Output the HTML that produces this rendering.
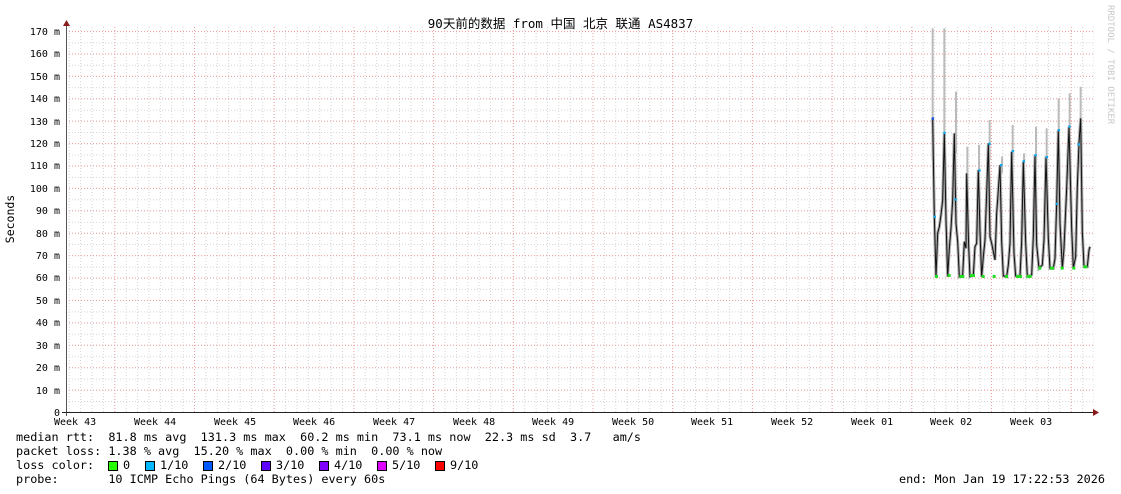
<!DOCTYPE html>
<html><head><meta charset="utf-8"><style>
html,body{margin:0;padding:0;background:#fff;}
body{width:1121px;height:494px;position:relative;overflow:hidden;font-family:"DejaVu Sans Mono","Liberation Mono",monospace;color:#000;}
.t{position:absolute;white-space:pre;}
.leg{font-size:11.8px;left:16px;}
.sq{position:absolute;width:8px;height:8px;border:1px solid #000;}
</style></head><body>
<svg width="1121" height="494" style="position:absolute;left:0;top:0">
<defs>
<pattern id="gv" x="114.3" y="0" width="11.386" height="494" patternUnits="userSpaceOnUse">
<line x1="0.5" y1="0" x2="0.5" y2="494" stroke="#d4d4d4" stroke-width="1" stroke-dasharray="1,2"/></pattern>
<pattern id="rv" x="114.3" y="0" width="79.7" height="494" patternUnits="userSpaceOnUse">
<line x1="0.5" y1="0" x2="0.5" y2="494" stroke="#f0a0a0" stroke-width="1" stroke-dasharray="1,2"/></pattern>
<pattern id="gh" x="0" y="31.2" width="1121" height="11.206" patternUnits="userSpaceOnUse">
<line x1="0" y1="0.5" x2="1121" y2="0.5" stroke="#d4d4d4" stroke-width="1" stroke-dasharray="1,2"/></pattern>
<pattern id="rh" x="0" y="31" width="1121" height="22.412" patternUnits="userSpaceOnUse">
<line x1="0" y1="0.5" x2="1121" y2="0.5" stroke="#f0a0a0" stroke-width="1" stroke-dasharray="1,2"/></pattern>
</defs>
<rect x="67" y="26" width="1027" height="386" fill="url(#gv)"/>
<rect x="67" y="26" width="1027" height="386" fill="url(#gh)"/>
<rect x="67" y="26" width="1027" height="386" fill="url(#rv)"/>
<rect x="67" y="26" width="1027" height="380" fill="url(#rh)"/>
<g transform="translate(920,20) scale(0.33333)">
<g stroke="#bbb" stroke-width="2">
<line x1="38" y1="25" x2="38" y2="420" vector-effect="non-scaling-stroke"/>
<line x1="73" y1="25" x2="73" y2="350" vector-effect="non-scaling-stroke"/>
<line x1="108" y1="215" x2="108" y2="400" vector-effect="non-scaling-stroke"/>
<line x1="209" y1="300" x2="209" y2="420" vector-effect="non-scaling-stroke"/>
<line x1="142" y1="380" x2="142" y2="480" vector-effect="non-scaling-stroke"/>
<line x1="177" y1="375" x2="177" y2="460" vector-effect="non-scaling-stroke"/>
<line x1="278" y1="315" x2="278" y2="420" vector-effect="non-scaling-stroke"/>
<line x1="348" y1="320" x2="348" y2="430" vector-effect="non-scaling-stroke"/>
<line x1="380" y1="325" x2="380" y2="440" vector-effect="non-scaling-stroke"/>
<line x1="416" y1="235" x2="416" y2="340" vector-effect="non-scaling-stroke"/>
<line x1="449" y1="220" x2="449" y2="330" vector-effect="non-scaling-stroke"/>
<line x1="482" y1="200" x2="482" y2="300" vector-effect="non-scaling-stroke"/>
<line x1="246" y1="410" x2="246" y2="460" vector-effect="non-scaling-stroke"/>
<line x1="312" y1="400" x2="312" y2="460" vector-effect="non-scaling-stroke"/>
</g>
<polyline fill="none" stroke="#aaa" stroke-width="3" vector-effect="non-scaling-stroke" points="38,295 43,590 48,770 53,640 58,620 63,585 68,540 73,340 78,600 83,770 88,685 93,625 98,540 103,340 108,610 113,665 118,770 128,765 133,665 138,685 140,460 146,680 150,770 160,765 165,680 170,670 175,450 180,635 185,770 190,710 195,660 200,520 205,370 210,650 215,670 225,720 230,580 235,510 240,435 245,665 250,768 260,770 265,735 270,670 275,395 282,700 287,768 300,768 305,665 310,425 317,668 322,770 335,765 340,650 345,405 350,675 357,745 367,735 372,660 378,410 385,655 390,745 400,745 405,715 410,550 415,330 420,610 427,745 432,685 440,505 447,320 455,625 460,745 467,710 472,500 477,370 482,295 487,635 492,740 502,740 507,690 510,680"/>
<polyline fill="none" stroke="#111" stroke-width="1" vector-effect="non-scaling-stroke" points="38,295 43,590 48,770 53,640 58,620 63,585 68,540 73,340 78,600 83,770 88,685 93,625 98,540 103,340 108,610 113,665 118,770 128,765 133,665 138,685 140,460 146,680 150,770 160,765 165,680 170,670 175,450 180,635 185,770 190,710 195,660 200,520 205,370 210,650 215,670 225,720 230,580 235,510 240,435 245,665 250,768 260,770 265,735 270,670 275,395 282,700 287,768 300,768 305,665 310,425 317,668 322,770 335,765 340,650 345,405 350,675 357,745 367,735 372,660 378,410 385,655 390,745 400,745 405,715 410,550 415,330 420,610 427,745 432,685 440,505 447,320 455,625 460,745 467,710 472,500 477,370 482,295 487,635 492,740 502,740 507,690 510,680"/>
<g fill="#22dd22">
<rect x="45" y="765" width="9" height="9"/><rect x="83" y="762" width="9" height="9"/><rect x="118" y="765" width="15" height="9"/><rect x="150" y="762" width="15" height="9"/><rect x="185" y="765" width="9" height="9"/><rect x="218" y="765" width="9" height="9"/><rect x="255" y="765" width="9" height="9"/><rect x="288" y="765" width="18" height="9"/><rect x="320" y="765" width="15" height="9"/><rect x="355" y="740" width="9" height="9"/><rect x="390" y="740" width="12" height="9"/><rect x="422" y="740" width="9" height="9"/><rect x="457" y="740" width="9" height="9"/><rect x="490" y="736" width="12" height="9"/>
</g>
<g fill="#11aaee">
<rect x="41" y="587" width="7" height="7"/><rect x="70" y="335" width="7" height="7"/><rect x="103" y="535" width="7" height="7"/><rect x="175" y="448" width="7" height="7"/><rect x="205" y="368" width="7" height="7"/><rect x="240" y="432" width="7" height="7"/><rect x="275" y="390" width="7" height="7"/><rect x="308" y="420" width="7" height="7"/><rect x="343" y="402" width="7" height="7"/><rect x="377" y="408" width="7" height="7"/><rect x="413" y="327" width="7" height="7"/><rect x="445" y="316" width="7" height="7"/><rect x="472" y="370" width="7" height="7"/><rect x="407" y="548" width="7" height="7"/>
</g>
<rect x="35" y="292" width="7" height="7" fill="#1155ee"/>
</g>
<line x1="66.5" y1="26" x2="66.5" y2="416" stroke="#555"/>
<line x1="62" y1="412.5" x2="1094" y2="412.5" stroke="#222"/>
<polygon points="63,26 70,26 66.5,20" fill="#8b1a1a"/>
<polygon points="1093,409 1093,416 1099,412.5" fill="#8b1a1a"/>
<text x="1108" y="5" font-size="9" fill="#c8c8c8" font-family="DejaVu Sans Mono" transform="rotate(90 1108 5)">RRDTOOL / TOBI OETIKER</text>
<text x="14" y="219" font-size="11.5" font-family="DejaVu Sans Mono" text-anchor="middle" transform="rotate(-90 14 219)">Seconds</text>
</svg>
<div class="t" style="left:0;width:1121px;top:13px;text-align:center;font-size:12.5px;font-family:'DejaVu Sans Mono','Noto Sans CJK SC',monospace;">90天前的数据 from 中国 北京 联通 AS4837</div>
<div class="t" style="left:0;top:22px;font-size:10px;line-height:22.41px;text-align:right;width:60px;">170 m
160 m
150 m
140 m
130 m
120 m
110 m
100 m
 90 m
 80 m
 70 m
 60 m
 50 m
 40 m
 30 m
 20 m
 10 m
    0</div>
<div class="t" style="top:417px;left:54px;font-size:10px;">Week 43</div>
<div class="t" style="top:417px;left:134px;font-size:10px;">Week 44</div>
<div class="t" style="top:417px;left:214px;font-size:10px;">Week 45</div>
<div class="t" style="top:417px;left:293px;font-size:10px;">Week 46</div>
<div class="t" style="top:417px;left:373px;font-size:10px;">Week 47</div>
<div class="t" style="top:417px;left:453px;font-size:10px;">Week 48</div>
<div class="t" style="top:417px;left:532px;font-size:10px;">Week 49</div>
<div class="t" style="top:417px;left:612px;font-size:10px;">Week 50</div>
<div class="t" style="top:417px;left:691px;font-size:10px;">Week 51</div>
<div class="t" style="top:417px;left:771px;font-size:10px;">Week 52</div>
<div class="t" style="top:417px;left:851px;font-size:10px;">Week 01</div>
<div class="t" style="top:417px;left:930px;font-size:10px;">Week 02</div>
<div class="t" style="top:417px;left:1010px;font-size:10px;">Week 03</div>
<div class="t leg" style="top:430px;">median rtt:  81.8 ms avg  131.3 ms max  60.2 ms min  73.1 ms now  22.3 ms sd  3.7   am/s</div>
<div class="t leg" style="top:444px;">packet loss: 1.38 % avg  15.20 % max  0.00 % min  0.00 % now</div>
<div class="t leg" style="top:458px;">loss color:</div>
<div class="sq" style="left:108px;top:461px;background:#26ff00"></div><div class="t leg" style="top:458px;left:123px">0</div>
<div class="sq" style="left:145px;top:461px;background:#00b8ff"></div><div class="t leg" style="top:458px;left:160px">1/10</div>
<div class="sq" style="left:203px;top:461px;background:#0059ff"></div><div class="t leg" style="top:458px;left:218px">2/10</div>
<div class="sq" style="left:261px;top:461px;background:#5e00ff"></div><div class="t leg" style="top:458px;left:276px">3/10</div>
<div class="sq" style="left:319px;top:461px;background:#7e00ff"></div><div class="t leg" style="top:458px;left:334px">4/10</div>
<div class="sq" style="left:377px;top:461px;background:#dd00ff"></div><div class="t leg" style="top:458px;left:392px">5/10</div>
<div class="sq" style="left:435px;top:461px;background:#ff0000"></div><div class="t leg" style="top:458px;left:450px">9/10</div>
<div class="t leg" style="top:472px;">probe:       10 ICMP Echo Pings (64 Bytes) every 60s</div>
<div class="t leg" style="top:472px;left:899px;">end: Mon Jan 19 17:22:53 2026</div>
</body></html>
